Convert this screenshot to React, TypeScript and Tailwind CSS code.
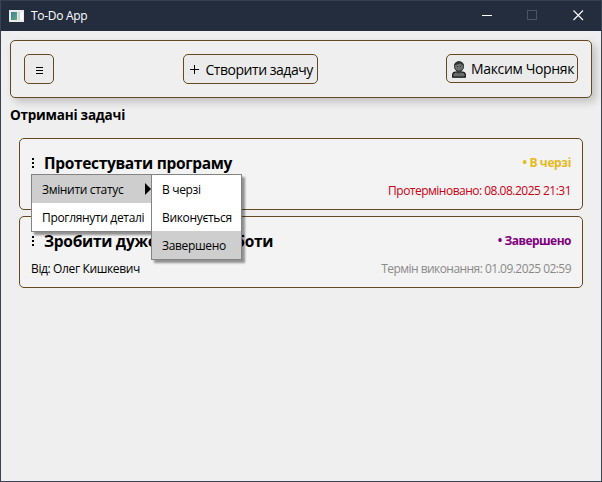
import type { ReactNode } from 'react';

function TitleBar() {
  return (
    <div className="flex h-[31px] shrink-0 items-center border-t border-[#363f52] bg-[#232d3d] pl-2 text-white">
      <svg width="15" height="12" viewBox="0 0 15 12" className="shrink-0" shapeRendering="crispEdges">
        <defs>
          <linearGradient id="pane" x1="0" y1="0" x2="1" y2="1">
            <stop offset="0" stopColor="#3f7fa0" />
            <stop offset="1" stopColor="#5cab78" />
          </linearGradient>
        </defs>
        <rect width="15" height="12" fill="#e9eaea" />
        <rect x="2" y="2" width="6" height="8" fill="url(#pane)" />
        <rect x="9" y="2" width="2" height="8" fill="#cfd6d6" />
        <rect x="11" y="2" width="3" height="8" fill="#f8f8f8" />
      </svg>
      <span className="ml-[7px] text-[12px] leading-[16px] tracking-[-0.3px]">To-Do App</span>
      <div className="ml-auto flex h-full">
        <svg width="138" height="30" viewBox="0 0 138 30" fill="none">
          <path d="M19 14.5h10" stroke="#fff" />
          <rect x="64.5" y="9.5" width="9" height="9" stroke="#4b5362" />
          <path d="M110.5 9.5l9.5 9.5M120 9.5l-9.5 9.5" stroke="#fff" strokeWidth="1.1" />
        </svg>
      </div>
    </div>
  );
}

function Person() {
  return (
    <svg width="14" height="17" viewBox="0 0 14 17" className="mt-[2px] shrink-0">
      <path d="M0.7 16.2v-2.400q0-2.600 3-2.800h6.600q3 .2 3 2.800v2.400z" fill="#6b6d6d" stroke="#111" strokeWidth="1.2" />
      <path d="M5 9h4v2.200L7 12.400 5 11.200z" fill="#555" stroke="#222" strokeWidth=".6" />
      <path d="M2.500 5.500Q2.300 1 7 .7q4.700.3 4.500 4.800Q11.300 10 7 10.200 2.700 10 2.500 5.500z" fill="#6f7171" stroke="#2b2b2b" />
      <path d="M2.400 4.600Q2.600.5 7 .5t4.600 4.100L9.500 3.400 8.300 2.600 5 3.600z" fill="#303333" />
      <path d="M5 5.500h1M8 5.500h1" stroke="#333" />
    </svg>
  );
}

function Card({ title, titleClass, status, statusClass, due, dueClass, children }: {
  title: string; titleClass: string; status: string; statusClass: string; due: string; dueClass: string; children?: ReactNode;
}) {
  return (
    <section className="relative h-[72px] rounded-[5px] border border-[#65481f] bg-[#f3f3f3] px-[11px] pt-[12px]">
      <div className="flex h-[24px] items-center">
        <svg width="4" height="12" viewBox="0 0 4 12" shapeRendering="crispEdges" className="-mt-px">
          <path d="M1 1h2v2h-2zM1 5h2v2h-2zM1 9h2v2h-2z" fill="#000" />
        </svg>
        <h2 className={`ml-[9px] text-[15.5px] leading-[22px] font-bold whitespace-nowrap ${titleClass}`}>{title}</h2>
        <span className={`ml-auto text-[12px] leading-[16px] font-bold whitespace-nowrap ${statusClass}`}>{status}</span>
      </div>
      <div className="mt-[8px] flex justify-between text-[12px] leading-[16px] whitespace-nowrap">
        <span className="tracking-[-0.37px]">Від: Олег Кишкевич</span>
        <span className={dueClass}>{due}</span>
      </div>
      {children}
    </section>
  );
}

function MenuItem({ label, active, arrow }: { label: string; active?: boolean; arrow?: boolean }) {
  return (
    <div className={`flex h-[28px] items-center justify-between pt-px pl-[10px] text-[12px] leading-[16px] tracking-[-0.33px] whitespace-nowrap ${active ? 'bg-[#cecece]' : 'bg-white'}`}>
      <span>{label}</span>
      {arrow && (
        <svg width="6" height="12" viewBox="0 0 6 12" className="-mt-px"><path d="M0 0l6 6-6 6z" /></svg>
      )}
    </div>
  );
}

function ContextMenu() {
  return (
    <div className="absolute top-[35px] left-[11px] z-10">
      <div className="h-[58px] w-[121px] border border-[#838383] bg-white shadow-[3px_3px_2px_rgba(0,0,0,0.4)]">
        <MenuItem label="Змінити статус" active arrow />
        <MenuItem label="Проглянути деталі" />
      </div>
      <div className="absolute top-0 left-[120px] h-[86px] w-[91px] border border-[#838383] bg-white shadow-[3px_3px_2px_rgba(0,0,0,0.4)]">
        <MenuItem label="В черзі" />
        <MenuItem label="Виконується" />
        <MenuItem label="Завершено" active />
      </div>
    </div>
  );
}

export default function App() {
  return (
    <div className="flex h-[482px] w-[602px] flex-col overflow-hidden border-r border-b border-l border-[#3a4354] bg-[#efefef] font-['Open_Sans','Noto_Sans',sans-serif] text-black">
      <TitleBar />
      <main className="px-[9px] pt-[9px]">
        <header className="flex h-[58px] items-start justify-between rounded-[5px] border border-[#65481f] bg-[#efefef] p-[13px] shadow-[4px_4px_8px_rgba(0,0,0,0.2)]">
          <button className="flex size-[30px] items-center justify-center rounded-[5px] border border-[#65481f] bg-[#ebebeb]">
            <svg width="7" height="7" viewBox="0 0 7 7" shapeRendering="crispEdges" className="mt-[3px]">
              <path d="M0 .5h7M0 3.5h7M0 6.500h7" stroke="#000" />
            </svg>
          </button>
          <button className="flex h-[30px] w-[135px] items-center rounded-[5px] border border-[#65481f] bg-[#ebebeb] pl-[6px] whitespace-nowrap">
            <svg width="9" height="9" viewBox="0 0 9 9" shapeRendering="crispEdges" className="mt-px shrink-0">
              <path d="M0 4.500h9M4.500 0v9" stroke="#000" />
            </svg>
            <span className="ml-[7px] pt-[2px] text-[14px] leading-[20px] tracking-[-0.47px]">Створити задачу</span>
          </button>
          <button className="flex h-[29px] w-[132px] items-center rounded-[5px] border border-[#65481f] bg-[#ebebeb] pl-[5px] whitespace-nowrap">
            <Person />
            <span className="ml-[5px] pt-px text-[14px] leading-[20px] tracking-[-0.35px]">Максим Чорняк</span>
          </button>
        </header>
        <h1 className="mt-[7px] text-[13.5px] leading-[20px] font-bold tracking-[-0.22px]">Отримані задачі</h1>
        <div className="mt-[13px] flex flex-col gap-[6px] px-[9px]">
          <Card title="Протестувати програму" titleClass="tracking-[-0.33px]" status="• В черзі" statusClass="text-[#e5b91c] tracking-[-0.35px]" due="Протерміновано: 08.08.2025 21:31" dueClass="text-[#cc0012] tracking-[-0.51px]">
            <ContextMenu />
          </Card>
          <Card title="Зробити дуже багато роботи" titleClass="tracking-[-0.27px]" status="• Завершено" statusClass="text-[#800080] tracking-[-0.53px]" due="Термін виконання: 01.09.2025 02:59" dueClass="text-[#8a8a8a] tracking-[-0.55px]" />
        </div>
      </main>
    </div>
  );
}
